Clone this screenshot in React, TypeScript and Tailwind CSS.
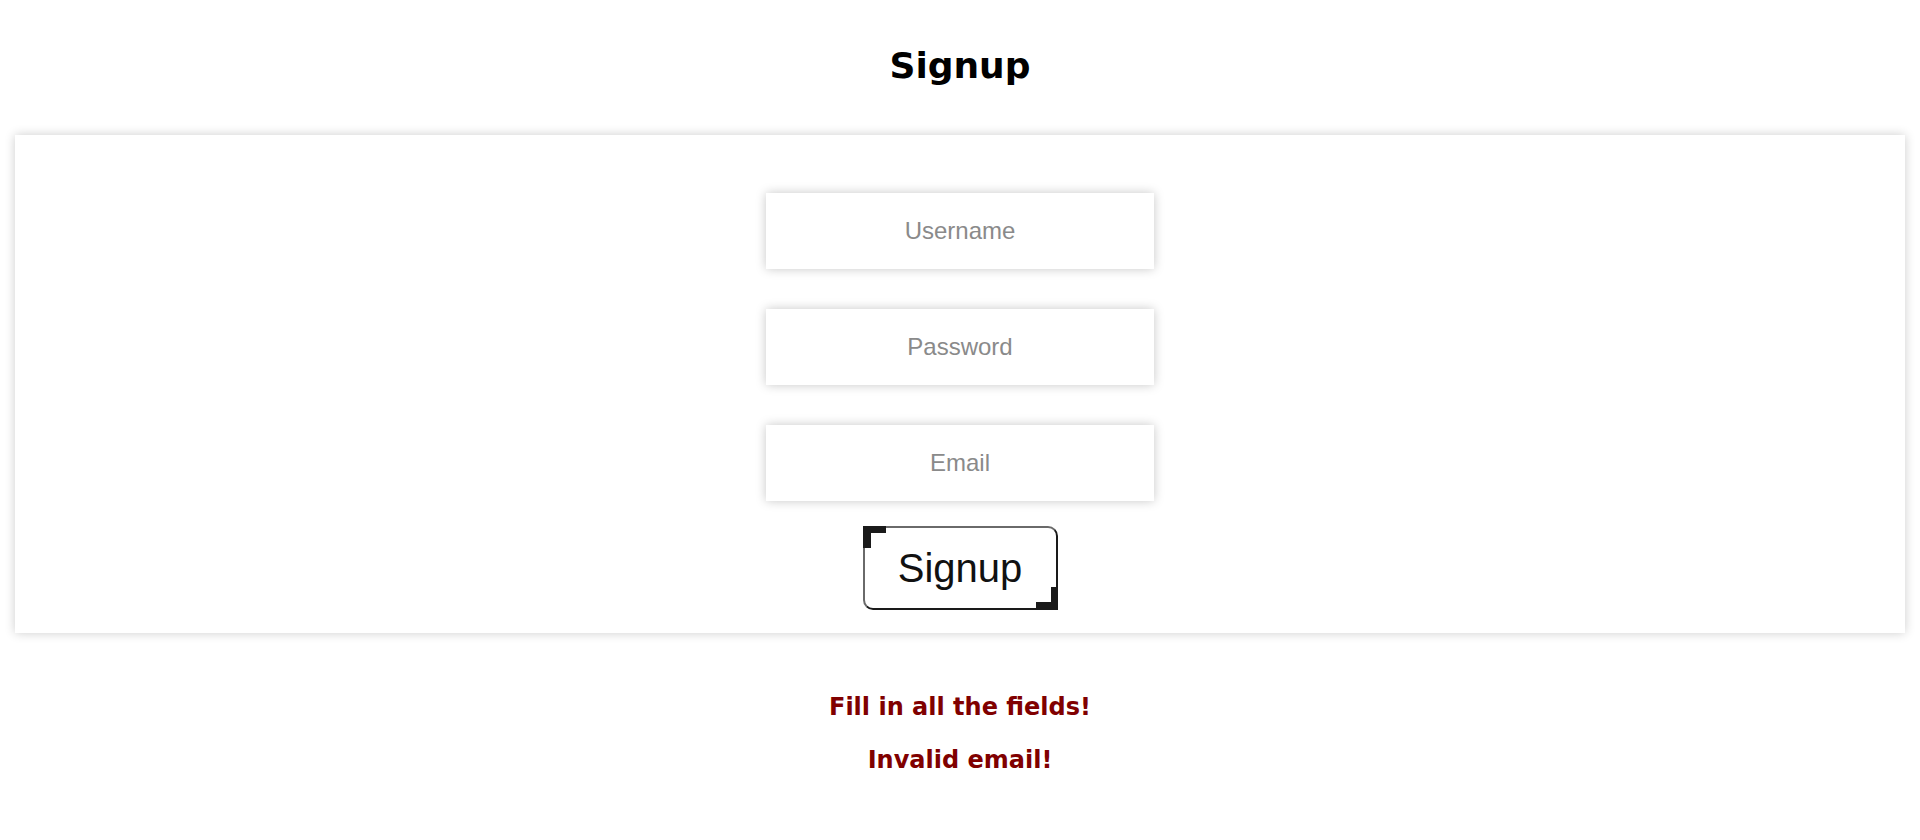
import React from 'react';

function Field({ placeholder, type = 'text' }: { placeholder: string; type?: string }) {
  return (
    <input
      type={type}
      placeholder={placeholder}
      className="w-[388px] h-[76px] bg-white text-center text-[24px] text-[#333] placeholder:text-[#8a8a8a] outline-none shadow-[0_0_10px_rgba(0,0,0,0.22)] font-['Liberation_Sans',Arial,sans-serif]"
    />
  );
}

export default function App() {
  return (
    <div className="min-h-screen bg-white pt-[45px]">
      <h1 className="text-center text-[36px] leading-[42px] font-bold text-black font-['DejaVu_Sans',Verdana,sans-serif]">
        Signup
      </h1>

      <div className="mx-[15px] mt-[48px] h-[498px] bg-white shadow-[0_0_10px_rgba(0,0,0,0.2)] flex flex-col items-center pt-[58px]">
        <div className="flex flex-col items-center gap-[40px]">
          <Field placeholder="Username" />
          <Field placeholder="Password" type="password" />
          <Field placeholder="Email" />
        </div>

        <button className="relative mt-[25px] w-[195px] h-[84px] rounded-[10px] border-2 border-t-[#6a6a6a] border-l-[#6a6a6a] border-r-[#1a1a1a] border-b-[#1a1a1a] bg-white text-[40px] leading-none text-[#111] font-['Liberation_Sans',Arial,sans-serif]">
          Signup
          <span className="absolute -left-[2px] -top-[2px] w-[23px] h-[22px] border-t-[7px] border-l-[8px] border-[#1a1a1a]" />
          <span className="absolute -right-[2px] -bottom-[2px] w-[22px] h-[23px] border-b-[8px] border-r-[7px] border-[#1a1a1a]" />
        </button>
      </div>

      <div className="mt-[56px] flex flex-col items-center gap-[17px] text-[24px] font-bold text-[#800000] font-['DejaVu_Sans',Verdana,sans-serif]">
        <p>Fill in all the fields!</p>
        <p>Invalid email!</p>
      </div>
    </div>
  );
}
